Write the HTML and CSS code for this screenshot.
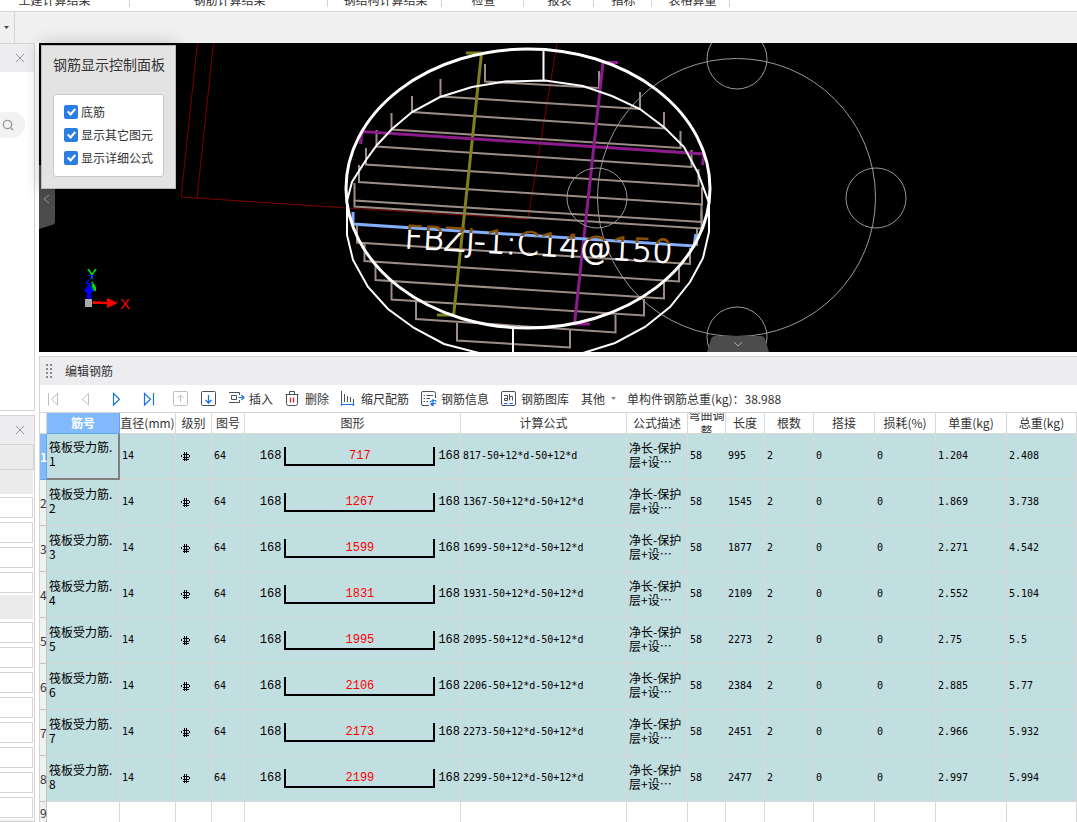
FILE: index.html
```html
<!DOCTYPE html>
<html lang="zh-CN">
<head>
<meta charset="utf-8">
<title>编辑钢筋</title>
<link rel="stylesheet" href="styles.css">
</head>
<body>
<svg class="defs" aria-hidden="true">
  <symbol id="grade" viewBox="0 0 10 10"><path d="M1.500 2.500H8M0.500 3V5M8.500 3V5M1.500 5.500H8M1.500 7.500H7.500M3.500 0V9M5.500 0V9"/></symbol>
  <symbol id="close" viewBox="0 0 10 10"><path d="M1 1L9 9M9 1L1 9"/></symbol>
</svg>

<header class="ribbon">
  <span class="tab tab-civil">土建计算结果</span>
  <span class="tab tab-rebar">钢筋计算结果</span>
  <span class="tab tab-steel">钢结构计算结果</span>
  <span class="tab tab-check">检查</span>
  <span class="tab tab-report">报表</span>
  <span class="tab tab-index">指标</span>
  <span class="tab tab-sheet">表格算量</span>
</header>
<div class="band"><button class="band-drop" aria-label="展开"><svg width="5" height="3" viewBox="0 0 5 3"><path d="M0 0H5L2.500 3Z" fill="#444"/></svg></button></div>

<div class="workspace">
  <aside class="side">
    <section class="side-panel side-top">
      <div class="side-head"><button class="close" aria-label="关闭"><svg><use href="#close"/></svg></button></div>
      <button class="search" aria-label="搜索"><svg width="12" height="12" viewBox="0 0 12 12" fill="none" stroke="#999" stroke-width="1.300"><circle cx="5.500" cy="5.500" r="4.200"/><path d="M8.500 8.500L11 11"/></svg></button>
    </section>
    <section class="side-panel side-props">
      <div class="side-head"><button class="close" aria-label="关闭"><svg><use href="#close"/></svg></button></div>
      <div class="prop-head"></div>
      <div class="prop-group"></div>
      <div class="prop-fields"><input aria-label="属性1"><input aria-label="属性2"><input aria-label="属性3"><input aria-label="属性4"></div>
      <div class="prop-group"></div>
      <div class="prop-fields"><input aria-label="属性5"><input aria-label="属性6"><input aria-label="属性7"><input aria-label="属性8"><input aria-label="属性9"><input aria-label="属性10"><input aria-label="属性11"><input aria-label="属性12"></div>
      <div class="prop-group"></div>
    </section>
  </aside>

  <main class="main">
    <section class="scene">
      <svg class="drawing" viewBox="39 43 1038 309" preserveAspectRatio="xMinYMin slice" fill="none">
        <defs><linearGradient id="labelFill" gradientUnits="userSpaceOnUse" x1="0" y1="-23" x2="0" y2="0"><stop offset="0.200" stop-color="#8a5208"/><stop offset="0.200" stop-color="#fff"/></linearGradient></defs>
        <g stroke="#800000">
          <path d="M197.500 43L181 197L347 208L528 219L557 43M213.500 43L197 198"/>
        </g>
        <g stroke="#9c8d86" stroke-width="2">
          <path d="M485 64V81.500L599 88V71"/>
          <path d="M440.500 79V96.500L640 109V92"/>
          <path d="M412 96V112L664 128.500V112"/>
          <path d="M391.500 113V129.500L680.500 148V131"/>
          <path d="M376.500 130V146.500L691.500 167V150"/>
          <path d="M366 148V164.500L698.500 186V169"/>
          <path d="M359 165V182L702 204.500V187"/>
          <path d="M354.500 183V200.500L701.500 222V204"/>
          <path d="M354.500 200V206.500L701.500 228.500V210"/>
          <path d="M357 226V242.500L690 264V248"/>
          <path d="M364.500 244V261L679 281.500V266"/>
          <path d="M375.500 262V280L664 298.500V282"/>
          <path d="M391.500 282V299.500L644 315.500V299"/>
          <path d="M416 301V319L615.500 332.500V315"/>
          <path d="M457 323V340.500L570 347.500V330"/>
          <path d="M697 229V246"/>
        </g>
        <g stroke="#80801c" stroke-width="3"><path d="M466 53H482M481.500 53L453.500 316M437 315H454"/></g>
        <g stroke="#8c1b8c" stroke-width="3"><path d="M618 62.500H603L574.500 324H590M360.500 144L362 131.500L704 154L702.500 165"/></g>
        <g stroke="#999">
          <circle cx="736.500" cy="197.500" r="139"/>
          <circle cx="737" cy="59" r="30"/><circle cx="876" cy="198" r="30"/><circle cx="737" cy="337" r="30"/><circle cx="597" cy="198" r="30"/>
        </g>
        <path d="M353 212V224L694 246L696 234" stroke="#82b0ff" stroke-width="3"/>
        <g stroke="#fff" stroke-width="2">
          <path d="M505 81.500L545 80.500L583 86L612 96L640 109L665 128L684 147L698 173L709 203V232L703 258L690 282L670 307L645 327L615 343L583 353L550 358H500L475 352L444 344L414 328L388 309L368 287L353 260L347 235V201L352 182L366 160L377 145L392 129L412 112L440 97L472 87Z"/>
          <path d="M543.500 50V81M513 328V352"/>
        </g>
        <ellipse cx="528" cy="188.500" rx="182" ry="139.500" stroke="#fff" stroke-width="3"/>
        <text class="rebar-label" transform="translate(404 248) rotate(3.200)" fill="url(#labelFill)" stroke="url(#labelFill)">FBZJ-1:C14@150</text>
        <g class="axes">
          <path d="M92 281L96 287L95 291H91Z" fill="#0a0"/>
          <path d="M92 282L95 288V291" stroke="#0f0" stroke-width="1.500"/>
          <path d="M89 283L84 291L87 293V300H91V293L94 291Z" fill="#00f"/>
          <path d="M85 299H92V307H85Z" fill="#aaa"/>
          <path d="M93 301L107 302V298L118 303L107 308V304L93 304Z" fill="#f00"/>
          <text x="87" y="279" fill="#0f0" class="axis-y">Y</text>
          <text x="86" y="284" fill="#00f" class="axis-z">Z</text>
          <text x="120" y="309" fill="#f00" class="axis-x">X</text>
        </g>
      </svg>
      <button class="handle-left" aria-label="收起"><svg width="16" height="64" viewBox="0 0 16 64"><path d="M0 0H12Q16 1 16 5V56Q16 59 13 60L0 64Z" fill="#4c4c4c"/><path d="M10 30L5 34L10 38" fill="none" stroke="#999"/></svg></button>
      <button class="handle-bottom" aria-label="收起"><svg width="62" height="16" viewBox="0 0 62 16"><path d="M0 16L4 3Q5 0 8 0H54Q57 0 58 3L62 16Z" fill="#4c4c4c"/><path d="M27 6L31 10L35 6" fill="none" stroke="#aaa"/></svg></button>
      <div class="popup">
        <h2>钢筋显示控制面板</h2>
        <div class="popup-box">
          <label><input type="checkbox" checked>底筋</label>
          <label><input type="checkbox" checked>显示其它图元</label>
          <label><input type="checkbox" checked>显示详细公式</label>
        </div>
      </div>
    </section>

    <section class="editor">
      <div class="editor-title"><svg width="8" height="16" viewBox="0 0 8 16" fill="#888"><path d="M1 1h2v2h-2zM5 1h2v2h-2zM1 5h2v2h-2zM5 5h2v2h-2zM1 9h2v2h-2zM5 9h2v2h-2zM1 13h2v2h-2zM5 13h2v2h-2z"/></svg>编辑钢筋</div>
      <div class="toolbar">
        <div class="tools">
          <button class="nav" aria-label="首条" disabled><svg width="16" height="16" viewBox="0 0 16 16" stroke="#bfbfbf"><path d="M3.500 2V14.500M12.500 2.500V14L6.500 8.250Z"/></svg></button>
          <button class="nav" aria-label="上一条" disabled><svg width="16" height="16" viewBox="0 0 16 16" stroke="#bfbfbf"><path d="M11.500 2.500V14L5.500 8.250Z"/></svg></button>
          <button class="nav" aria-label="下一条"><svg width="16" height="16" viewBox="0 0 16 16" stroke="#1a73e8" stroke-width="1.200"><path d="M4.500 2.500V14L10.500 8.250Z"/></svg></button>
          <button class="nav" aria-label="末条"><svg width="16" height="16" viewBox="0 0 16 16" stroke="#1a73e8" stroke-width="1.200"><path d="M3.500 2.500V14L9.500 8.250ZM12.500 2V14.500"/></svg></button>
          <button class="nav" aria-label="上移" disabled><svg width="16" height="16" viewBox="0 0 16 16" stroke="#bfbfbf"><rect x="0.500" y="0.500" width="14" height="14" rx="1"/><path d="M7.500 11V4M4.500 7L7.500 4L10.500 7"/></svg></button>
        </div>
        <button class="nav nav-down" aria-label="下移"><svg width="16" height="16" viewBox="0 0 16 16" stroke="#4a4f5c"><rect x="0.500" y="0.500" width="14" height="14" rx="1"/><path d="M7.500 4V12M4.500 9L7.500 12L10.500 9" stroke="#1a73e8" stroke-width="1.300"/></svg></button>
        <div class="commands">
          <button><svg width="16" height="16" viewBox="0 0 16 16" stroke="#4a4f5c"><path d="M0 1.500H10.500V4M2.500 4.500H7.500V8.500H2.500ZM0 11.500H10.500V9"/><path d="M9.500 6.500H15M12.500 4L15 6.500L12.500 9" stroke="#1a73e8" stroke-width="1.200"/></svg>插入</button>
          <button><svg width="16" height="16" viewBox="0 0 16 16" stroke="#4a4f5c"><path d="M0.500 3.500H13.500M4.500 3V0.500H9.500V3M1.500 3.500V12.500Q1.500 14.500 3.500 14.500H10.500Q12.500 14.500 12.500 12.500V3.500"/><path d="M5.500 6.500V11.500M8.500 6.500V11.500" stroke="#e0222a" stroke-width="1.300"/></svg>删除</button>
          <button><svg width="16" height="16" viewBox="0 0 16 16" stroke="#4a4f5c"><path d="M0.500 0V11M3.500 3V11M6.500 5V11M9.500 6V11M12.500 8V11"/><path d="M0.500 11V15M12.500 11V15M0.500 13.500H12.500" stroke="#1a73e8" stroke-width="1.200"/></svg>缩尺配筋</button>
          <button><svg width="16" height="16" viewBox="0 0 16 16" stroke="#4a4f5c"><path d="M8 14.500H2Q0.500 14.500 0.500 13V2Q0.500 0.500 2 0.500H12.500Q14.500 0.500 14.500 2.500V7M2.500 4.500H4M5.500 4.500H12M2.500 7.500H4M5.500 7.500H9M2.500 10.500H4M5.500 10.500H7"/><path d="M12 8V15M9 11L11.500 9.500H14Q15 9.500 15 11M15 12.500H9.500M9.500 12.500L11.500 14.500" stroke="#1a73e8" stroke-width="1.200"/></svg>钢筋信息</button>
          <button><svg width="16" height="16" viewBox="0 0 16 16" stroke="#4a4f5c"><rect x="0.500" y="0.500" width="14" height="14" rx="1.500"/><path d="M3 4.500H6.500V9.500H3.500V7.500H6.500M8.500 3V9.500M8.500 5.500H11.500V9.500"/><path d="M3 12.500H6.500M8.500 12.500H12" stroke="#1a73e8" stroke-width="1.200"/></svg>钢筋图库</button>
          <button class="other">其他<svg width="5" height="3" viewBox="0 0 5 3"><path class="caret" d="M0 0H5L2.500 3Z" fill="#888"/></svg></button>
        </div>
        <span class="total">单构件钢筋总重(kg)：38.988</span>
      </div>
      <div class="grid">
      <table>
        <colgroup><col class="c-row"><col class="c-name"><col class="c-dia"><col class="c-grade"><col class="c-fig"><col class="c-shape"><col class="c-formula"><col class="c-desc"><col class="c-bend"><col class="c-len"><col class="c-count"><col class="c-lap"><col class="c-loss"><col class="c-unit"><col></colgroup>
        <thead><tr><th></th><th class="active">筋号</th><th>直径(mm)</th><th>级别</th><th>图号</th><th>图形</th><th>计算公式</th><th>公式描述</th><th><div class="wrap">弯曲调整</div></th><th>长度</th><th>根数</th><th>搭接</th><th>损耗(%)</th><th>单重(kg)</th><th>总重(kg)</th></tr></thead>
        <tbody>
          <tr class="current"><th>1</th><td class="name">筏板受力筋.<br>1</td><td>14</td><td><svg class="grade"><use href="#grade"/></svg></td><td>64</td><td class="figure"><div class="shape"><span>168</span><b>717</b><span>168</span></div></td><td>817-50+12*d-50+12*d</td><td class="desc">净长-保护<br>层+设…</td><td>58</td><td>995</td><td>2</td><td>0</td><td>0</td><td>1.204</td><td>2.408</td></tr>
          <tr><th>2</th><td class="name">筏板受力筋.<br>2</td><td>14</td><td><svg class="grade"><use href="#grade"/></svg></td><td>64</td><td class="figure"><div class="shape"><span>168</span><b>1267</b><span>168</span></div></td><td>1367-50+12*d-50+12*d</td><td class="desc">净长-保护<br>层+设…</td><td>58</td><td>1545</td><td>2</td><td>0</td><td>0</td><td>1.869</td><td>3.738</td></tr>
          <tr><th>3</th><td class="name">筏板受力筋.<br>3</td><td>14</td><td><svg class="grade"><use href="#grade"/></svg></td><td>64</td><td class="figure"><div class="shape"><span>168</span><b>1599</b><span>168</span></div></td><td>1699-50+12*d-50+12*d</td><td class="desc">净长-保护<br>层+设…</td><td>58</td><td>1877</td><td>2</td><td>0</td><td>0</td><td>2.271</td><td>4.542</td></tr>
          <tr><th>4</th><td class="name">筏板受力筋.<br>4</td><td>14</td><td><svg class="grade"><use href="#grade"/></svg></td><td>64</td><td class="figure"><div class="shape"><span>168</span><b>1831</b><span>168</span></div></td><td>1931-50+12*d-50+12*d</td><td class="desc">净长-保护<br>层+设…</td><td>58</td><td>2109</td><td>2</td><td>0</td><td>0</td><td>2.552</td><td>5.104</td></tr>
          <tr><th>5</th><td class="name">筏板受力筋.<br>5</td><td>14</td><td><svg class="grade"><use href="#grade"/></svg></td><td>64</td><td class="figure"><div class="shape"><span>168</span><b>1995</b><span>168</span></div></td><td>2095-50+12*d-50+12*d</td><td class="desc">净长-保护<br>层+设…</td><td>58</td><td>2273</td><td>2</td><td>0</td><td>0</td><td>2.75</td><td>5.5</td></tr>
          <tr><th>6</th><td class="name">筏板受力筋.<br>6</td><td>14</td><td><svg class="grade"><use href="#grade"/></svg></td><td>64</td><td class="figure"><div class="shape"><span>168</span><b>2106</b><span>168</span></div></td><td>2206-50+12*d-50+12*d</td><td class="desc">净长-保护<br>层+设…</td><td>58</td><td>2384</td><td>2</td><td>0</td><td>0</td><td>2.885</td><td>5.77</td></tr>
          <tr><th>7</th><td class="name">筏板受力筋.<br>7</td><td>14</td><td><svg class="grade"><use href="#grade"/></svg></td><td>64</td><td class="figure"><div class="shape"><span>168</span><b>2173</b><span>168</span></div></td><td>2273-50+12*d-50+12*d</td><td class="desc">净长-保护<br>层+设…</td><td>58</td><td>2451</td><td>2</td><td>0</td><td>0</td><td>2.966</td><td>5.932</td></tr>
          <tr><th>8</th><td class="name">筏板受力筋.<br>8</td><td>14</td><td><svg class="grade"><use href="#grade"/></svg></td><td>64</td><td class="figure"><div class="shape"><span>168</span><b>2199</b><span>168</span></div></td><td>2299-50+12*d-50+12*d</td><td class="desc">净长-保护<br>层+设…</td><td>58</td><td>2477</td><td>2</td><td>0</td><td>0</td><td>2.997</td><td>5.994</td></tr>
          <tr class="blank"><th>9</th><td></td><td></td><td></td><td></td><td></td><td></td><td></td><td></td><td></td><td></td><td></td><td></td><td></td><td></td></tr>
        </tbody>
      </table>
      </div>
    </section>
  </main>
</div>
</body>
</html>
```
FILE: styles.css
```css
* { box-sizing: border-box; }
body {
  margin: 0;
  height: 100vh;
  display: flex;
  flex-direction: column;
  overflow: hidden;
  background: #fff;
  color: #333;
  font: 12px/16px "Noto Sans CJK SC", sans-serif;
}
button { border: 0; padding: 0; background: none; color: inherit; font: inherit; display: flex; align-items: center; justify-content: center; }
.defs { position: absolute; width: 0; height: 0; }

.ribbon { flex: none; display: flex; align-items: flex-end; height: 12px; overflow: hidden; border-bottom: 1px solid #d9d9d9; padding-bottom: 4px; }
.tab { flex: none; height: 16px; line-height: 18px; text-align: center; border-right: 1px solid #d4d4d4; white-space: nowrap; }
.tab-civil { width: 130px; padding-right: 20px; }
.tab-rebar { width: 198px; padding-left: 2px; }
.tab-steel { width: 114px; padding-left: 2px; }
.tab-check { width: 82px; padding-left: 2px; }
.tab-report { width: 70px; padding-left: 2px; }
.tab-index { width: 58px; padding-left: 2px; }
.tab-sheet { width: 78px; padding-left: 4px; }

.band { flex: none; height: 31px; background: #f0f0f0; }
.band-drop { width: 15px; height: 31px; padding-right: 2px; border-right: 1px solid #d4d4d4; }

.workspace { flex: 1; min-height: 0; display: flex; gap: 4px; }
.side { flex: none; width: 35px; display: flex; flex-direction: column; gap: 4px; }
.side-panel { border: 1px solid #d4d4d4; border-left: 0; background: #fff; }
.side-top { flex: none; height: 368px; }
.side-props { flex: 1; min-height: 0; overflow: hidden; }
.side-head { height: 28px; background: #ededf0; display: flex; align-items: center; justify-content: flex-end; padding-right: 9px; }
.close svg { width: 10px; height: 10px; stroke: #999; }
.search { width: 25px; height: 26px; margin-top: 40px; padding-right: 9px; background: #f2f2f2; border-radius: 0 13px 13px 0; }
.prop-head { height: 26px; background: #ebebeb; border: 1px solid #d4d4d4; border-left: 0; }
.prop-group { height: 24px; background: #ebebeb; margin-right: 1px; }
.prop-fields { display: flex; flex-direction: column; gap: 4px; padding: 3px 1px 2px 0; }
.prop-fields input { width: 100%; height: 21px; border: 1px solid #d4d4d4; border-left: 0; padding: 0; background: #fff; }

.main { flex: 1; min-width: 0; display: flex; flex-direction: column; gap: 4px; }
.scene { flex: none; height: 309px; position: relative; background: #000; }
.drawing { display: block; width: 100%; height: 100%; overflow: hidden; }
.rebar-label { font: 32px "DejaVu Sans", sans-serif; font-weight: 200; stroke-width: 1px; }
.axis-y { font: 15px "Liberation Sans", sans-serif; }
.axis-z { font: italic 13px "Liberation Sans", sans-serif; }
.axis-x { font: 15px "Liberation Sans", sans-serif; }
.handle-left { position: absolute; left: 0; top: 122px; }
.handle-bottom { position: absolute; left: 668px; bottom: 0; }
.popup { position: absolute; left: 2px; top: 2px; width: 135px; height: 144px; padding: 9px 11px; background: #e3e3e3; border: 1px solid #b9bbbb; box-shadow: 0 0 16px rgba(0, 0, 0, 0.25); }
.popup h2 { margin: 0 0 21px; font-size: 14px; line-height: 18px; font-weight: 400; white-space: nowrap; }
.popup-box { height: 83px; width: 111px; padding: 5px 10px; background: #fff; border: 1px solid #c9c9c9; border-radius: 3px; }
.popup label { display: flex; align-items: center; gap: 3px; height: 23px; white-space: nowrap; }
.popup input { appearance: none; position: relative; flex: none; width: 14px; height: 14px; margin: 0; border-radius: 2px; background: #2b7de1; }
.popup input::after { content: ""; position: absolute; left: 5px; top: 2px; width: 4px; height: 8px; box-sizing: content-box; width: 3px; height: 6px; border: solid #fff; border-width: 0 2px 2px 0; transform: rotate(42deg); }

.editor { flex: 1; min-height: 0; display: flex; flex-direction: column; border-top: 1px solid #d4d4d4; border-left: 1px solid #d4d4d4; overflow: hidden; }
.editor-title { flex: none; display: flex; align-items: center; gap: 12px; height: 28px; padding-left: 5px; background: #ededf0; }
.toolbar { flex: none; display: flex; align-items: center; height: 28px; padding-left: 1px; border-bottom: 1px solid #d4d4d4; white-space: nowrap; }
.toolbar svg { fill: none; flex: none; }
.tools { display: flex; gap: 8px; }
.nav { width: 24px; height: 24px; }
.nav-down { margin-left: 4px; }
.commands { display: flex; gap: 12px; margin-left: 8px; }
.commands button { gap: 4px; height: 24px; }
.commands .other { gap: 6px; }
.total { margin-left: 11px; }

.grid { flex: 1; min-height: 0; overflow: hidden; }
table { width: 100%; table-layout: fixed; border-collapse: separate; border-spacing: 0; }
.c-row { width: 7px; }
.c-name { width: 73px; }
.c-dia { width: 56px; }
.c-grade { width: 36px; }
.c-fig { width: 33px; }
.c-shape { width: 216px; }
.c-formula { width: 166px; }
.c-desc, .c-lap, .c-loss { width: 61px; }
.c-bend { width: 38px; }
.c-len { width: 39px; }
.c-count { width: 49px; }
.c-unit { width: 71px; }
th, td { padding: 0; border-right: 1px solid #d9d9d9; border-bottom: 1px solid #d9d9d9; font-weight: 400; white-space: nowrap; }
thead th { height: 21px; line-height: 16px; text-align: center; }
thead .active { background: #80b9fc; color: #fff; font-weight: 700; border-color: #62a4f2; }
.wrap { display: flex; align-items: center; height: 20px; overflow: hidden; white-space: normal; }
tbody td { height: 46px; padding: 0 2px 2px; background: #c1dee0; color: #000; font: 10px/14px "DejaVu Sans Mono", monospace; }
tbody th { background: #f0f0f0; border-color: #c4c4c4; text-align: center; }
tbody .name, tbody .desc { padding: 0 2px 4px; font: 12px/14px "Noto Sans CJK SC", sans-serif; }
tbody .figure { padding: 0 0 1px; }
.current th { background: #80b9fc; color: #fff; font-weight: 700; border-color: #62a4f2; }
.current .name { border-right: 2px solid #808080; border-bottom: 2px solid #808080; }
.grade { display: block; width: 10px; height: 10px; margin: 2px 0 0 3px; fill: none; stroke: #000; shape-rendering: crispEdges; }
.shape { display: flex; align-items: center; justify-content: flex-end; gap: 3px; font: 12px/14px "Liberation Mono", monospace; }
.shape b { width: 151px; height: 19px; border: 2px solid #000; border-top: 0; color: #f00; font-weight: 400; text-align: center; line-height: 19px; }
.blank td, .blank th { height: 22px; background: #fff; }
.blank th { background: #f0f0f0; }
```
